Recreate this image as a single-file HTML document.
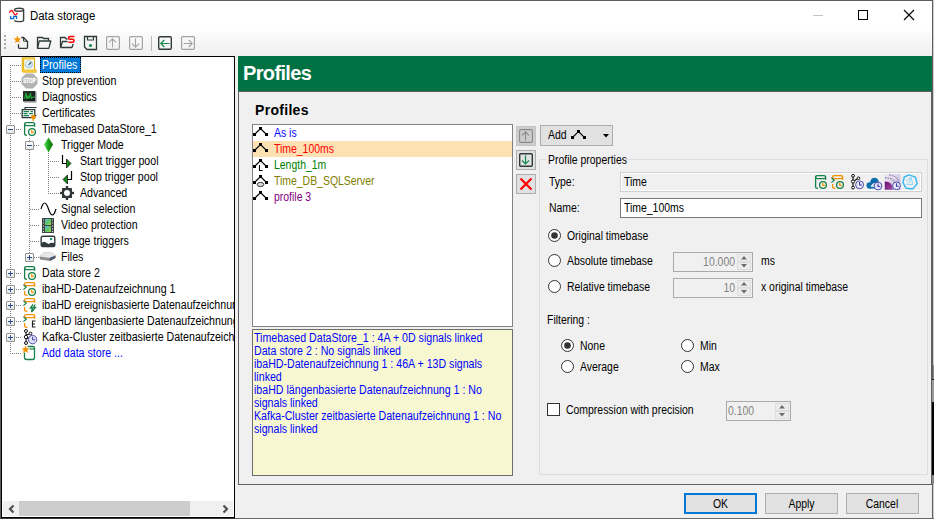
<!DOCTYPE html>
<html><head><meta charset="utf-8"><style>
*{box-sizing:border-box}
html,body{margin:0;padding:0}
body{width:934px;height:519px;overflow:hidden;position:relative;background:#f0f0f0;font-family:"Liberation Sans",sans-serif;font-size:12px;color:#000}
.a{position:absolute}
.t{position:absolute;white-space:nowrap;line-height:14px;font-size:12px;transform-origin:0 0;transform:scaleX(0.87)}
svg{position:absolute;overflow:visible}
</style></head><body>
<div class="a" style="left:0px;top:0px;width:934px;height:1px;background:#5e5e5e"></div>
<div class="a" style="left:0px;top:0px;width:1px;height:519px;background:#5e5e5e"></div>
<div class="a" style="left:932px;top:0px;width:1px;height:519px;background:#5e5e5e"></div>
<div class="a" style="left:933px;top:0px;width:1px;height:519px;background:#cfcfcf"></div>
<div class="a" style="left:933px;top:365px;width:1px;height:14px;background:#8a8a8a"></div>
<div class="a" style="left:932px;top:379px;width:2px;height:1px;background:#202020"></div>
<div class="a" style="left:932px;top:380px;width:2px;height:22px;background:#9a9a9a"></div>
<div class="a" style="left:932px;top:402px;width:2px;height:73px;background:#000"></div>
<div class="a" style="left:932px;top:475px;width:2px;height:9px;background:#888"></div>
<div class="a" style="left:0px;top:518px;width:235px;height:1px;background:#3a3a3a"></div>
<div class="a" style="left:235px;top:518px;width:699px;height:1px;background:#6a6a6a"></div>
<div class="a" style="left:1px;top:1px;width:931px;height:30px;background:#fff"></div>
<svg style="left:8px;top:7px;" width="18" height="17" viewBox="0 0 18 17">
<ellipse cx="11" cy="2.7" rx="4.6" ry="1.5" fill="none" stroke="#3a3f3f" stroke-width="1.4"/>
<path d="M15.6 2.7 L15.6 13.3 Q15.6 14.6 11 14.6 Q7.5 14.6 6.3 13.4" fill="none" stroke="#3a3f3f" stroke-width="1.4"/>
<path d="M1.3 5.6 Q2.5 3.2 3.6 3.5 Q4.8 3.9 5.8 6.2 Q6.8 8.2 7.9 7.6 Q8.8 7.1 9.5 6" fill="none" stroke="#ff1a1a" stroke-width="1.4"/>
<path d="M2.6 9 L2.6 11.6 L5.6 11.6 L5.6 9.4 L8.5 9.4 L8.5 11.9" fill="none" stroke="#0a6ed1" stroke-width="1.4"/>
</svg>
<div class="t" style="left:30px;top:9px;transform:scaleX(0.95)">Data storage</div>
<div class="a" style="left:813px;top:15px;width:10px;height:1px;background:#c4c4c4"></div>
<div class="a" style="left:858px;top:10px;width:10px;height:10px;border:1px solid #000"></div>
<svg style="left:903px;top:9px;" width="12" height="12" viewBox="0 0 12 12"><path d="M1 1L11 11M11 1L1 11" stroke="#000" stroke-width="1.1"/></svg>
<div class="a" style="left:1px;top:31px;width:931px;height:25px;background:linear-gradient(#fcfcfc,#f0f0f0)"></div>
<div class="a" style="left:4px;top:35px;width:2px;height:2px;background:#a9a9a9"></div>
<div class="a" style="left:4px;top:39px;width:2px;height:2px;background:#a9a9a9"></div>
<div class="a" style="left:4px;top:43px;width:2px;height:2px;background:#a9a9a9"></div>
<div class="a" style="left:4px;top:47px;width:2px;height:2px;background:#a9a9a9"></div>
<svg style="left:13px;top:35px;" width="17" height="15" viewBox="0 0 17 15">
<path d="M8.3 2.5 L10.5 2.5 L14.5 6.5 L14.5 12.5 Q14.5 13.3 13.7 13.3 L6.3 13.3 Q5.5 13.3 5.5 12.5 L5.5 9.3" fill="none" stroke="#2f3a3a" stroke-width="1.3"/>
<path d="M10.5 2.8 L10.5 5.2 Q10.5 6.3 11.6 6.3 L14.2 6.3" fill="none" stroke="#2f3a3a" stroke-width="1.1"/>
<path d="M4.4 0.8 L5.5 3.3 L8.2 3.5 L6.1 5.3 L6.8 8 L4.4 6.6 L2 8 L2.7 5.3 L0.6 3.5 L3.3 3.3 Z" fill="#f39200"/>
</svg>
<svg style="left:36px;top:36px;" width="16" height="13" viewBox="0 0 16 13">
<path d="M1.5 12.3 L1.5 1.5 L6.5 1.5 L7.5 2.5 L12.5 2.5 L12.5 4.5" fill="none" stroke="#2f3a3a" stroke-width="1.3"/>
<path d="M1.5 12.3 L3.2 5 L14.8 5 L12.8 12.3 Z" fill="none" stroke="#2f3a3a" stroke-width="1.3" stroke-linejoin="round"/>
</svg>
<svg style="left:59px;top:35px;" width="17" height="14" viewBox="0 0 17 14">
<path d="M1.5 12.5 L1.5 2.5 L6 2.5 L7.5 4 L8.5 4" fill="none" stroke="#2f3a3a" stroke-width="1.3"/>
<path d="M1.5 12.5 L3.5 6.5 L8.5 6.5 M13 12.5 L1.5 12.5 M14.2 9 L13 12.5" fill="none" stroke="#2f3a3a" stroke-width="1.3"/>
<path d="M15.5 1.5 L11 1.5 Q9.6 1.5 9.6 3 Q9.6 4.3 11 4.3 L13.6 4.3 Q15 4.3 15 5.8 Q15 7.2 13.6 7.2 L9.3 7.2" fill="none" stroke="#f00" stroke-width="1.6"/>
</svg>
<svg style="left:83px;top:35px;" width="15" height="16" viewBox="0 0 15 16">
<path d="M1.5 1.5 L13.5 1.5 L13.5 14.5 L4 14.5 L1.5 12 Z" fill="none" stroke="#2f3a3a" stroke-width="1.3"/>
<path d="M4.5 1.5 L4.5 5 L10.5 5 L10.5 1.5" fill="none" stroke="#2f3a3a" stroke-width="1.2"/>
<circle cx="7.5" cy="10.5" r="1.6" fill="#128a4e"/>
</svg>
<svg style="left:106px;top:36px;" width="14" height="14" viewBox="0 0 14 14"><rect x="0.6" y="0.6" width="12.8" height="12.8" rx="1.2" fill="none" stroke="#a3a3a3" stroke-width="1.2"/><path d="M6.5 2.8 L6.5 11.5 M3 6.3 L6.5 2.8 L10 6.3" fill="none" stroke="#a3a3a3" stroke-width="1.1"/></svg>
<svg style="left:129px;top:36px;" width="14" height="14" viewBox="0 0 14 14"><rect x="0.6" y="0.6" width="12.8" height="12.8" rx="1.2" fill="none" stroke="#a3a3a3" stroke-width="1.2"/><path d="M6.5 2.5 L6.5 11.2 M3 7.7 L6.5 11.2 L10 7.7" fill="none" stroke="#a3a3a3" stroke-width="1.1"/></svg>
<div class="a" style="left:151px;top:36px;width:1px;height:15px;background:#b8b8b8"></div>
<svg style="left:158px;top:36px;" width="14" height="14" viewBox="0 0 14 14"><rect x="0.7" y="0.7" width="12.6" height="12.6" rx="1.2" fill="none" stroke="#2f3a3a" stroke-width="1.4"/><path d="M2.8 7.5 L11.5 7.5 M6.3 4 L2.8 7.5 L6.3 11" fill="none" stroke="#128a4e" stroke-width="1.2"/></svg>
<svg style="left:181px;top:36px;" width="14" height="14" viewBox="0 0 14 14"><rect x="0.6" y="0.6" width="12.8" height="12.8" rx="1.2" fill="none" stroke="#a3a3a3" stroke-width="1.2"/><path d="M2.5 7.5 L11.2 7.5 M7.7 4 L11.2 7.5 L7.7 11" fill="none" stroke="#a3a3a3" stroke-width="1.1"/></svg>
<div class="a" style="left:1px;top:56px;width:234px;height:462px;border:1px solid #000;background:#fff"></div>
<div class="a" style="left:0;top:0;width:234px;height:501px;overflow:hidden">
<div class="a" style="left:10px;top:65px;width:1px;height:289px;background:repeating-linear-gradient(180deg,#808080 0 1px,transparent 1px 2px)"></div>
<div class="a" style="left:29px;top:138px;width:1px;height:120px;background:repeating-linear-gradient(180deg,#808080 0 1px,transparent 1px 2px)"></div>
<div class="a" style="left:48px;top:153px;width:1px;height:41px;background:repeating-linear-gradient(180deg,#808080 0 1px,transparent 1px 2px)"></div>
<div class="a" style="left:12px;top:65px;width:9px;height:1px;background:repeating-linear-gradient(90deg,#808080 0 1px,transparent 1px 2px)"></div>
<div class="a" style="left:12px;top:81px;width:9px;height:1px;background:repeating-linear-gradient(90deg,#808080 0 1px,transparent 1px 2px)"></div>
<div class="a" style="left:12px;top:97px;width:9px;height:1px;background:repeating-linear-gradient(90deg,#808080 0 1px,transparent 1px 2px)"></div>
<div class="a" style="left:12px;top:113px;width:9px;height:1px;background:repeating-linear-gradient(90deg,#808080 0 1px,transparent 1px 2px)"></div>
<div class="a" style="left:16px;top:129px;width:5px;height:1px;background:repeating-linear-gradient(90deg,#808080 0 1px,transparent 1px 2px)"></div>
<div class="a" style="left:34px;top:145px;width:6px;height:1px;background:repeating-linear-gradient(90deg,#808080 0 1px,transparent 1px 2px)"></div>
<div class="a" style="left:50px;top:161px;width:9px;height:1px;background:repeating-linear-gradient(90deg,#808080 0 1px,transparent 1px 2px)"></div>
<div class="a" style="left:50px;top:177px;width:9px;height:1px;background:repeating-linear-gradient(90deg,#808080 0 1px,transparent 1px 2px)"></div>
<div class="a" style="left:50px;top:193px;width:9px;height:1px;background:repeating-linear-gradient(90deg,#808080 0 1px,transparent 1px 2px)"></div>
<div class="a" style="left:30px;top:209px;width:10px;height:1px;background:repeating-linear-gradient(90deg,#808080 0 1px,transparent 1px 2px)"></div>
<div class="a" style="left:30px;top:225px;width:10px;height:1px;background:repeating-linear-gradient(90deg,#808080 0 1px,transparent 1px 2px)"></div>
<div class="a" style="left:30px;top:241px;width:10px;height:1px;background:repeating-linear-gradient(90deg,#808080 0 1px,transparent 1px 2px)"></div>
<div class="a" style="left:34px;top:257px;width:6px;height:1px;background:repeating-linear-gradient(90deg,#808080 0 1px,transparent 1px 2px)"></div>
<div class="a" style="left:16px;top:273px;width:5px;height:1px;background:repeating-linear-gradient(90deg,#808080 0 1px,transparent 1px 2px)"></div>
<div class="a" style="left:16px;top:289px;width:5px;height:1px;background:repeating-linear-gradient(90deg,#808080 0 1px,transparent 1px 2px)"></div>
<div class="a" style="left:16px;top:305px;width:5px;height:1px;background:repeating-linear-gradient(90deg,#808080 0 1px,transparent 1px 2px)"></div>
<div class="a" style="left:16px;top:321px;width:5px;height:1px;background:repeating-linear-gradient(90deg,#808080 0 1px,transparent 1px 2px)"></div>
<div class="a" style="left:16px;top:337px;width:5px;height:1px;background:repeating-linear-gradient(90deg,#808080 0 1px,transparent 1px 2px)"></div>
<div class="a" style="left:12px;top:353px;width:9px;height:1px;background:repeating-linear-gradient(90deg,#808080 0 1px,transparent 1px 2px)"></div>
<div class="a" style="left:6px;top:125px;width:9px;height:9px;border:1px solid #919191;border-radius:1px;background:linear-gradient(#fff,#e6e6e6)"></div>
<div class="a" style="left:8px;top:129px;width:5px;height:1px;background:#2b4c8c"></div>
<div class="a" style="left:25px;top:141px;width:9px;height:9px;border:1px solid #919191;border-radius:1px;background:linear-gradient(#fff,#e6e6e6)"></div>
<div class="a" style="left:27px;top:145px;width:5px;height:1px;background:#2b4c8c"></div>
<div class="a" style="left:25px;top:253px;width:9px;height:9px;border:1px solid #919191;border-radius:1px;background:linear-gradient(#fff,#e6e6e6)"></div>
<div class="a" style="left:27px;top:257px;width:5px;height:1px;background:#2b4c8c"></div>
<div class="a" style="left:29px;top:255px;width:1px;height:5px;background:#2b4c8c"></div>
<div class="a" style="left:6px;top:269px;width:9px;height:9px;border:1px solid #919191;border-radius:1px;background:linear-gradient(#fff,#e6e6e6)"></div>
<div class="a" style="left:8px;top:273px;width:5px;height:1px;background:#2b4c8c"></div>
<div class="a" style="left:10px;top:271px;width:1px;height:5px;background:#2b4c8c"></div>
<div class="a" style="left:6px;top:285px;width:9px;height:9px;border:1px solid #919191;border-radius:1px;background:linear-gradient(#fff,#e6e6e6)"></div>
<div class="a" style="left:8px;top:289px;width:5px;height:1px;background:#2b4c8c"></div>
<div class="a" style="left:10px;top:287px;width:1px;height:5px;background:#2b4c8c"></div>
<div class="a" style="left:6px;top:301px;width:9px;height:9px;border:1px solid #919191;border-radius:1px;background:linear-gradient(#fff,#e6e6e6)"></div>
<div class="a" style="left:8px;top:305px;width:5px;height:1px;background:#2b4c8c"></div>
<div class="a" style="left:10px;top:303px;width:1px;height:5px;background:#2b4c8c"></div>
<div class="a" style="left:6px;top:317px;width:9px;height:9px;border:1px solid #919191;border-radius:1px;background:linear-gradient(#fff,#e6e6e6)"></div>
<div class="a" style="left:8px;top:321px;width:5px;height:1px;background:#2b4c8c"></div>
<div class="a" style="left:10px;top:319px;width:1px;height:5px;background:#2b4c8c"></div>
<div class="a" style="left:6px;top:333px;width:9px;height:9px;border:1px solid #919191;border-radius:1px;background:linear-gradient(#fff,#e6e6e6)"></div>
<div class="a" style="left:8px;top:337px;width:5px;height:1px;background:#2b4c8c"></div>
<div class="a" style="left:10px;top:335px;width:1px;height:5px;background:#2b4c8c"></div>
<div class="a" style="left:40px;top:57px;width:41px;height:16px;background:#0078d7;outline:1px dotted #000;outline-offset:-1px"></div>
<div class="t" style="left:42px;top:58px;color:#fff;transform:scaleX(0.885)">Profiles</div>
<div class="t" style="left:42px;top:74px;color:#000;transform:scaleX(0.885)">Stop prevention</div>
<div class="t" style="left:42px;top:90px;color:#000;transform:scaleX(0.885)">Diagnostics</div>
<div class="t" style="left:42px;top:106px;color:#000;transform:scaleX(0.885)">Certificates</div>
<div class="t" style="left:42px;top:122px;color:#000;transform:scaleX(0.885)">Timebased DataStore_1</div>
<div class="t" style="left:61px;top:138px;color:#000;transform:scaleX(0.885)">Trigger Mode</div>
<div class="t" style="left:80px;top:154px;color:#000;transform:scaleX(0.885)">Start trigger pool</div>
<div class="t" style="left:80px;top:170px;color:#000;transform:scaleX(0.885)">Stop trigger pool</div>
<div class="t" style="left:80px;top:186px;color:#000;transform:scaleX(0.885)">Advanced</div>
<div class="t" style="left:61px;top:202px;color:#000;transform:scaleX(0.885)">Signal selection</div>
<div class="t" style="left:61px;top:218px;color:#000;transform:scaleX(0.885)">Video protection</div>
<div class="t" style="left:61px;top:234px;color:#000;transform:scaleX(0.885)">Image triggers</div>
<div class="t" style="left:61px;top:250px;color:#000;transform:scaleX(0.885)">Files</div>
<div class="t" style="left:42px;top:266px;color:#000;transform:scaleX(0.885)">Data store 2</div>
<div class="t" style="left:42px;top:282px;color:#000;transform:scaleX(0.885)">ibaHD-Datenaufzeichnung 1</div>
<div class="t" style="left:42px;top:298px;color:#000;transform:scaleX(0.885)">ibaHD ereignisbasierte Datenaufzeichnung 1</div>
<div class="t" style="left:42px;top:314px;color:#000;transform:scaleX(0.885)">ibaHD l&auml;ngenbasierte Datenaufzeichnung 1</div>
<div class="t" style="left:42px;top:330px;color:#000;transform:scaleX(0.885)">Kafka-Cluster zeitbasierte Datenaufzeichnung 1</div>
<div class="t" style="left:42px;top:346px;color:#0000ff;transform:scaleX(0.885)">Add data store ...</div>
<svg style="left:21px;top:57px;" width="16" height="16" viewBox="0 0 16 16"><defs><radialGradient id="dial" cx="0.4" cy="0.35" r="0.7"><stop offset="0" stop-color="#ffffff"/><stop offset="1" stop-color="#9fd3ee"/></radialGradient></defs>
<path d="M1.5 1 L13.5 1 L13.5 12 L15 13.5 L15 15 L2 15 L1.5 14 Z" fill="#fffbe6" stroke="#d9a81a" stroke-width="1.1"/>
<rect x="0.8" y="0.5" width="2.4" height="14.5" fill="#e8b825"/>
<rect x="0.8" y="0.5" width="13" height="2" fill="#f0c63a"/>
<path d="M2 12.5 L13.5 12.5 L15.5 14.5 L15.5 15.5 L2 15.5 Z" fill="#f0c63a"/>
<circle cx="8" cy="7.3" r="3.9" fill="url(#dial)" stroke="#b7cbd6" stroke-width="0.7"/>
<path d="M7.6 7.8 L10.2 5.2" stroke="#3a4650" stroke-width="1.2"/></svg>
<svg style="left:21px;top:73px;" width="17" height="16" viewBox="0 0 17 16"><path d="M5 0.5 L12 0.5 L16.5 5 L16.5 11 L12 15.5 L5 15.5 L0.5 11 L0.5 5 Z" fill="#b3b3b3"/>
<text x="2.2" y="10.2" font-family="Liberation Sans" font-weight="bold" font-size="6.4" fill="#fff" stroke="#fff" stroke-width="0.3" textLength="12.6" lengthAdjust="spacingAndGlyphs">STOP</text></svg>
<svg style="left:22px;top:90px;" width="15" height="14" viewBox="0 0 15 14"><defs><linearGradient id="dgx" x1="0" y1="0" x2="1" y2="1"><stop offset="0" stop-color="#2a3a2c"/><stop offset="1" stop-color="#0e1610"/></linearGradient></defs>
<rect x="1" y="1" width="12.5" height="10.5" fill="url(#dgx)"/>
<path d="M13.5 2 L14.2 2 L14.2 12.2 L2 12.2 L2 11.5" fill="none" stroke="#9a9a9a" stroke-width="0.9"/>
<path d="M1.8 8 L3 8 L4 3.5 L5 9 L6.2 5.5 L7.2 8.5 L8.5 3 L9.5 9 L10.5 7 L12.8 7" fill="none" stroke="#22b83a" stroke-width="1"/></svg>
<svg style="left:21px;top:106px;" width="17" height="16" viewBox="0 0 17 16"><path d="M4 4 L4 1.5 L15.5 1.5" fill="none" stroke="#2f3a3a" stroke-width="1.2"/>
<rect x="1.2" y="3.6" width="12.6" height="8" fill="#fff" stroke="#2f3a3a" stroke-width="1.3"/>
<path d="M13.8 9.5 L15.5 9.5" stroke="#2f3a3a" stroke-width="1.1"/>
<path d="M2.5 5.6 L8 5.6 M9.5 5.6 L12 5.6 M2.5 7.6 L6.5 7.6 M8 7.6 L12 7.6 M2.5 9.6 L8 9.6" stroke="#16814a" stroke-width="1.1"/>
<circle cx="12.3" cy="11" r="2.3" fill="#f39200"/><path d="M12.3 12 L12.3 14.8" stroke="#f39200" stroke-width="1.6"/></svg>
<svg style="left:23px;top:121px;" width="14" height="16" viewBox="0 0 14 16"><rect x="1.6" y="1.6" width="10" height="3" rx="1.5" fill="#fff" stroke="#16814a" stroke-width="1.3"/>
<path d="M1.6 2.6 L1.6 13 Q1.6 14.3 4 14.3 M11.6 2.6 L11.6 5.8" fill="none" stroke="#16814a" stroke-width="1.3"/><circle cx="9" cy="11" r="3.4" fill="#fff" stroke="#16814a" stroke-width="1.3"/><path d="M8.7 8.8 L8.7 11.3 L11 11.3" fill="none" stroke="#f39200" stroke-width="1.2"/></svg>
<svg style="left:43px;top:137px;" width="11" height="16" viewBox="0 0 11 16"><defs><linearGradient id="dg" x1="0" x2="1"><stop offset="0" stop-color="#5ee05e"/><stop offset="0.5" stop-color="#1aa21a"/><stop offset="1" stop-color="#0a6a0a"/></linearGradient></defs>
<path d="M5.5 0.5 L10 7.5 L5.5 15.5 L1 7.5 Z" fill="url(#dg)"/></svg>
<svg style="left:60px;top:154px;" width="14" height="15" viewBox="0 0 14 15"><path d="M2.5 1 L2.5 9.5 L7 9.5" fill="none" stroke="#000" stroke-width="1.2"/><path d="M6.5 5 L11 9.5 L6.5 14 Z" fill="#138a13" stroke="#000" stroke-width="0.7"/></svg>
<svg style="left:61px;top:170px;" width="14" height="15" viewBox="0 0 14 15"><path d="M10.5 1 L10.5 9.5 L6 9.5" fill="none" stroke="#000" stroke-width="1.2"/><path d="M6.5 5 L2 9.5 L6.5 14 Z" fill="#138a13" stroke="#000" stroke-width="0.7"/></svg>
<svg style="left:60px;top:186px;" width="15" height="15" viewBox="0 0 15 15"><g fill="#2f3838"><rect x="2" y="2" width="10" height="10" rx="0.6"/><rect x="5.8" y="0" width="2.4" height="2.5"/><rect x="5.8" y="11.5" width="2.4" height="2.5"/><rect x="0" y="5.8" width="2.5" height="2.4"/><rect x="11.5" y="5.8" width="2.5" height="2.4"/></g><circle cx="7" cy="7" r="3" fill="#fff"/></svg>
<svg style="left:40px;top:202px;" width="17" height="14" viewBox="0 0 17 14"><path d="M1 7 Q4.5 -5 8.5 7 Q12.5 19 16 7" fill="none" stroke="#000" stroke-width="1.2"/></svg>
<svg style="left:42px;top:218px;" width="12" height="15" viewBox="0 0 12 15"><defs><linearGradient id="fg" x1="0" y1="0" x2="1" y2="1"><stop offset="0" stop-color="#6ab8e8"/><stop offset="0.5" stop-color="#5cc46a"/><stop offset="1" stop-color="#9ad24e"/></linearGradient></defs>
<rect x="0" y="0" width="12" height="15" fill="#3c4640"/>
<rect x="3" y="1" width="6" height="6" fill="url(#fg)"/><rect x="3" y="8" width="6" height="6" fill="url(#fg)"/>
<g fill="#e8e8e8"><rect x="1" y="1.5" width="1" height="1"/><rect x="1" y="4.5" width="1" height="1"/><rect x="1" y="7.5" width="1" height="1"/><rect x="1" y="10.5" width="1" height="1"/><rect x="1" y="13" width="1" height="1"/>
<rect x="10" y="1.5" width="1" height="1"/><rect x="10" y="4.5" width="1" height="1"/><rect x="10" y="7.5" width="1" height="1"/><rect x="10" y="10.5" width="1" height="1"/><rect x="10" y="13" width="1" height="1"/></g></svg>
<svg style="left:40px;top:235px;" width="16" height="13" viewBox="0 0 16 13"><rect x="1.2" y="1.2" width="13.6" height="10.3" rx="1.5" fill="#fff" stroke="#2f3a3a" stroke-width="1.4"/>
<path d="M1.2 11.5 L1.2 9 Q3 6 5 7 Q7 8 8.5 9 Q11 7 14.8 8 L14.8 11.5 Z" fill="#2f3a3a"/><rect x="10" y="3" width="2.2" height="2.2" fill="#2a9a6a"/></svg>
<svg style="left:38px;top:251px;" width="19" height="11" viewBox="0 0 19 11"><path d="M1.5 5.5 L6 1.5 L13.5 1 L17.5 4.5 L17.5 7 L12 10 L2 8.5 Z" fill="#8c8c8c"/>
<path d="M1.5 5.5 L6 1.5 L13.5 1 L17.5 4.5 L11.5 7 Z" fill="#e6e6e6"/>
<path d="M11.5 7 L17.5 4.5 L17.5 7 L12 10 Z" fill="#5a5a66"/>
<rect x="13" y="6" width="2" height="1.5" fill="#3a5a9a"/></svg>
<svg style="left:23px;top:265px;" width="14" height="16" viewBox="0 0 14 16"><rect x="1.6" y="1.6" width="10" height="3" rx="1.5" fill="#fff" stroke="#16814a" stroke-width="1.3"/>
<path d="M1.6 2.6 L1.6 13 Q1.6 14.3 4 14.3 M11.6 2.6 L11.6 5.8" fill="none" stroke="#16814a" stroke-width="1.3"/><circle cx="9" cy="11" r="3.4" fill="#fff" stroke="#16814a" stroke-width="1.3"/><path d="M8.7 8.8 L8.7 11.3 L11 11.3" fill="none" stroke="#f39200" stroke-width="1.2"/></svg>
<svg style="left:23px;top:281px;" width="14" height="16" viewBox="0 0 14 16"><rect x="1.6" y="1.6" width="10" height="3" rx="1.5" fill="#fff" stroke="#f39200" stroke-width="1.3"/>
<path d="M11.6 2.6 L11.6 5.8 M1.6 10 L1.6 13 Q1.6 14.3 4.5 14.3" fill="none" stroke="#f39200" stroke-width="1.3"/>
<path d="M0.4 3.8 L3.2 6.2 L0.4 8.6" fill="none" stroke="#16814a" stroke-width="1.2"/><circle cx="9" cy="11" r="3.4" fill="#fff" stroke="#16814a" stroke-width="1.3"/><path d="M8.7 8.8 L8.7 11.3 L11 11.3" fill="none" stroke="#f39200" stroke-width="1.2"/></svg>
<svg style="left:23px;top:297px;" width="14" height="16" viewBox="0 0 14 16"><rect x="1.6" y="1.6" width="10" height="3" rx="1.5" fill="#fff" stroke="#f39200" stroke-width="1.3"/>
<path d="M11.6 2.6 L11.6 5.8 M1.6 10 L1.6 13 Q1.6 14.3 4.5 14.3" fill="none" stroke="#f39200" stroke-width="1.3"/>
<path d="M0.4 3.8 L3.2 6.2 L0.4 8.6" fill="none" stroke="#16814a" stroke-width="1.2"/><path d="M10 7.5 L7.5 11 L9.5 11 L8.5 15 L12.5 10.5 L10.5 10.5 L12 7.5" fill="none" stroke="#16814a" stroke-width="1.3"/></svg>
<svg style="left:23px;top:313px;" width="14" height="16" viewBox="0 0 14 16"><rect x="1.6" y="1.6" width="10" height="3" rx="1.5" fill="#fff" stroke="#f39200" stroke-width="1.3"/>
<path d="M11.6 2.6 L11.6 5.8 M1.6 10 L1.6 13 Q1.6 14.3 4.5 14.3" fill="none" stroke="#f39200" stroke-width="1.3"/>
<path d="M0.4 3.8 L3.2 6.2 L0.4 8.6" fill="none" stroke="#16814a" stroke-width="1.2"/><path d="M9.5 7.5 L9.5 14.5 M9.5 8 L12.5 8 M9.5 11 L12 11 M9.5 14 L12.5 14" fill="none" stroke="#222" stroke-width="1.2"/></svg>
<svg style="left:23px;top:329px;" width="15" height="16" viewBox="0 0 15 16"><path d="M3 2 L3 14 M3 6 L7 5 M3 10 L7 8" stroke="#111" stroke-width="1"/>
<circle cx="3" cy="2" r="1.5" fill="#fff" stroke="#111"/><circle cx="3" cy="8" r="1.7" fill="#fff" stroke="#111"/><circle cx="3" cy="14" r="1.5" fill="#fff" stroke="#111"/>
<circle cx="7.5" cy="4.5" r="1.4" fill="#fff" stroke="#111"/>
<circle cx="9.6" cy="10.6" r="4.2" fill="#e0e0f6" stroke="#4848a8" stroke-width="0.95"/><path d="M9.6 7.8 L9.6 10.8 L12 10.8" fill="none" stroke="#3c3ca8" stroke-width="1"/></svg>
<svg style="left:21px;top:345px;" width="17" height="16" viewBox="0 0 17 16"><path d="M6.5 1.5 L12 1.5 Q13.5 1.5 13.5 3 L13.5 12.5 Q13.5 14.5 11.5 14.5 L5.5 14.5 Q3.5 14.5 3.5 12.5 L3.5 7.5" fill="none" stroke="#16814a" stroke-width="1.3"/>
<path d="M8.5 4 L13.5 4" stroke="#16814a" stroke-width="1.2"/>
<path d="M4.5 0.6 L5.6 3.2 L8.4 3.4 L6.3 5.2 L7 8 L4.5 6.5 L2 8 L2.7 5.2 L0.6 3.4 L3.4 3.2 Z" fill="#f39200"/></svg>
</div>
<div class="a" style="left:3px;top:501px;width:230px;height:15px;background:#f0f0f0"></div>
<div class="a" style="left:19px;top:501px;width:171px;height:15px;background:#cdcdcd"></div>
<svg style="left:3px;top:501px;" width="16" height="16" viewBox="0 0 16 16"><path d="M10.5 4.5 L7 8 L10.5 11.5" fill="none" stroke="#505050" stroke-width="2.2"/></svg>
<svg style="left:217px;top:501px;" width="16" height="16" viewBox="0 0 16 16"><path d="M6.5 4.5 L10 8 L6.5 11.5" fill="none" stroke="#505050" stroke-width="2.2"/></svg>
<div class="a" style="left:238px;top:56px;width:694px;height:35px;background:#007142"></div>
<div class="t" style="left:243px;top:62px;font-size:20px;line-height:22px;font-weight:bold;color:#fff;transform:none;letter-spacing:-0.65px">Profiles</div>
<div class="a" style="left:238px;top:91px;width:694px;height:394px;border:1px solid #5f5f5f"></div>
<div class="t" style="left:255px;top:102px;font-size:14px;line-height:16px;font-weight:bold;transform:none;letter-spacing:0.3px">Profiles</div>
<div class="a" style="left:252px;top:124px;width:261px;height:203px;border:1px solid #828282;background:#fff"></div>
<div class="a" style="left:253px;top:141px;width:259px;height:16px;background:#fde1b2"></div>
<svg style="left:252px;top:126px;" width="16" height="14" viewBox="0 0 16 14"><path d="M2.5 8.5 L8.5 2.5 L14.5 8.5" fill="none" stroke="#000" stroke-width="1.2"/><rect x="1" y="7" width="3" height="3"/><rect x="7" y="1" width="3" height="3"/><rect x="13" y="7" width="3" height="3"/></svg>
<div class="t" style="left:274px;top:126px;color:#0000ff">As is</div>
<svg style="left:252px;top:142px;" width="16" height="14" viewBox="0 0 16 14"><path d="M2.5 8.5 L8.5 2.5 L14.5 8.5" fill="none" stroke="#000" stroke-width="1.2"/><rect x="1" y="7" width="3" height="3"/><rect x="7" y="1" width="3" height="3"/><rect x="13" y="7" width="3" height="3"/></svg>
<div class="t" style="left:274px;top:142px;color:#ff0000">Time_100ms</div>
<svg style="left:252px;top:158px;" width="16" height="14" viewBox="0 0 16 14"><path d="M2.5 8.5 L8.5 2.5 L14.5 8.5" fill="none" stroke="#000" stroke-width="1.2"/><rect x="1" y="7" width="3" height="3"/><rect x="7" y="1" width="3" height="3"/><rect x="13" y="7" width="3" height="3"/><path d="M7.5 7 L7.5 12.5 L10.5 12.5" fill="none" stroke="#000" stroke-width="1.1"/></svg>
<div class="t" style="left:274px;top:158px;color:#008000">Length_1m</div>
<svg style="left:252px;top:174px;" width="16" height="14" viewBox="0 0 16 14"><path d="M2.5 8.5 L8.5 2.5 L14.5 8.5" fill="none" stroke="#000" stroke-width="1.2"/><rect x="1" y="7" width="3" height="3"/><rect x="7" y="1" width="3" height="3"/><rect x="13" y="7" width="3" height="3"/><ellipse cx="8.5" cy="10.5" rx="3.3" ry="2.1" fill="#ddd" stroke="#222" stroke-width="0.9"/></svg>
<div class="t" style="left:274px;top:174px;color:#808000">Time_DB_SQLServer</div>
<svg style="left:252px;top:190px;" width="16" height="14" viewBox="0 0 16 14"><path d="M2.5 8.5 L8.5 2.5 L14.5 8.5" fill="none" stroke="#000" stroke-width="1.2"/><rect x="1" y="7" width="3" height="3"/><rect x="7" y="1" width="3" height="3"/><rect x="13" y="7" width="3" height="3"/></svg>
<div class="t" style="left:274px;top:190px;color:#800080">profile 3</div>
<div class="a" style="left:252px;top:329px;width:261px;height:147px;border:1px solid #6d6d6d;background:#f7f8d2"></div>
<div class="t" style="left:254px;top:331px;color:#0000ff;transform:scaleX(0.885)">Timebased DataStore_1 : 4A + 0D signals linked</div>
<div class="t" style="left:254px;top:344px;color:#0000ff;transform:scaleX(0.885)">Data store 2 : No signals linked</div>
<div class="t" style="left:254px;top:357px;color:#0000ff;transform:scaleX(0.885)">ibaHD-Datenaufzeichnung 1 : 46A + 13D signals</div>
<div class="t" style="left:254px;top:370px;color:#0000ff;transform:scaleX(0.885)">linked</div>
<div class="t" style="left:254px;top:383px;color:#0000ff;transform:scaleX(0.885)">ibaHD l&auml;ngenbasierte Datenaufzeichnung 1 : No</div>
<div class="t" style="left:254px;top:396px;color:#0000ff;transform:scaleX(0.885)">signals linked</div>
<div class="t" style="left:254px;top:409px;color:#0000ff;transform:scaleX(0.885)">Kafka-Cluster zeitbasierte Datenaufzeichnung 1 : No</div>
<div class="t" style="left:254px;top:422px;color:#0000ff;transform:scaleX(0.885)">signals linked</div>
<div class="a" style="left:516px;top:126px;width:20px;height:20px;background:#cccccc;border:1px solid #c4c4c4"></div>
<svg style="left:519px;top:129px;" width="14" height="14" viewBox="0 0 14 14"><rect x="0.6" y="0.6" width="12.8" height="12.8" rx="1.3" fill="none" stroke="#8a8a8a" stroke-width="1.1"/><path d="M6.5 2.8 L6.5 11.5 M3 6.3 L6.5 2.8 L10 6.3" fill="none" stroke="#8a8a8a" stroke-width="1.1"/></svg>
<div class="a" style="left:516px;top:150px;width:20px;height:20px;background:#e1e1e1;border:1px solid #adadad"></div>
<svg style="left:519px;top:153px;" width="14" height="14" viewBox="0 0 14 14"><rect x="0.7" y="0.7" width="12.6" height="12.6" rx="1" fill="none" stroke="#2f3a3a" stroke-width="1.4"/><path d="M6.5 2.5 L6.5 11 M3 7.5 L6.5 11 L10 7.5" fill="none" stroke="#128a4e" stroke-width="1.2"/></svg>
<div class="a" style="left:516px;top:174px;width:20px;height:20px;background:#e1e1e1;border:1px solid #adadad"></div>
<svg style="left:519px;top:177px;" width="14" height="14" viewBox="0 0 14 14"><path d="M1.5 1.5 L12.5 12.5 M12.5 1.5 L1.5 12.5" stroke="#f00" stroke-width="2.2"/></svg>
<div class="a" style="left:540px;top:125px;width:73px;height:21px;background:#e1e1e1;border:1px solid #adadad"></div>
<div class="t" style="left:548px;top:128px;">Add</div>
<svg style="left:571px;top:130px;" width="16" height="10" viewBox="0 0 16 10"><path d="M1.5 7.5 L7.5 1.5 L13.5 7.5" fill="none" stroke="#000" stroke-width="1.1"/><rect x="0" y="6" width="3" height="3"/><rect x="6" y="0" width="3" height="3"/><rect x="12" y="6" width="3" height="3"/></svg>
<svg style="left:603px;top:134px;" width="6" height="4" viewBox="0 0 6 4"><path d="M0 0 L6 0 L3 3.5 Z" fill="#000"/></svg>
<div class="a" style="left:539px;top:159px;width:389px;height:316px;border:1px solid #dcdcdc"></div>
<div class="a" style="left:546px;top:150px;width:80px;height:14px;background:#f0f0f0"></div>
<div class="t" style="left:548px;top:153px;">Profile properties</div>
<div class="t" style="left:549px;top:175px;">Type:</div>
<div class="t" style="left:549px;top:201px;">Name:</div>
<div class="a" style="left:620px;top:172px;width:302px;height:20px;border:1px solid #cfcfcf;background:#f0f0f0;box-shadow:inset 1px 1px 0 #fff,inset -1px -1px 0 #fff"></div>
<div class="t" style="left:624px;top:175px;">Time</div>
<div class="a" style="left:620px;top:198px;width:302px;height:20px;border:1px solid #7a7a7a;background:#fff"></div>
<div class="t" style="left:624px;top:201px;">Time_100ms</div>
<svg style="left:814px;top:174px;" width="14" height="16" viewBox="0 0 14 16"><rect x="1.6" y="1.6" width="10" height="3" rx="1.5" fill="#f0f0f0" stroke="#16814a" stroke-width="1.3"/><path d="M11.6 2.6 L11.6 5.8" fill="none" stroke="#16814a" stroke-width="1.3"/><path d="M1.6 2.6 L1.6 13 Q1.6 14.3 4 14.3" fill="none" stroke="#16814a" stroke-width="1.3"/><circle cx="9" cy="11" r="3.4" fill="#f0f0f0" stroke="#16814a" stroke-width="1.3"/><path d="M8.7 8.8 L8.7 11.3 L11 11.3" fill="none" stroke="#f39200" stroke-width="1.2"/></svg>
<svg style="left:831px;top:174px;" width="14" height="16" viewBox="0 0 14 16"><rect x="1.6" y="1.6" width="10" height="3" rx="1.5" fill="#f0f0f0" stroke="#f39200" stroke-width="1.3"/><path d="M11.6 2.6 L11.6 5.8" fill="none" stroke="#f39200" stroke-width="1.3"/><path d="M1.6 10 L1.6 13 Q1.6 14.3 4.5 14.3" fill="none" stroke="#f39200" stroke-width="1.3"/><path d="M0.4 3.8 L3.2 6.2 L0.4 8.6" fill="none" stroke="#16814a" stroke-width="1.2"/><circle cx="9" cy="11" r="3.4" fill="#f0f0f0" stroke="#16814a" stroke-width="1.3"/><path d="M8.7 8.8 L8.7 11.3 L11 11.3" fill="none" stroke="#f39200" stroke-width="1.2"/></svg>
<svg style="left:850px;top:174px;" width="15" height="16" viewBox="0 0 15 16"><path d="M3 2 L3 14 M3 7.5 L8 4.5" stroke="#111" stroke-width="1.1"/>
<circle cx="3" cy="1.8" r="1.4" fill="#fff" stroke="#111"/><circle cx="3" cy="7.5" r="1.6" fill="#fff" stroke="#111"/><circle cx="3" cy="13.6" r="1.4" fill="#fff" stroke="#111"/><circle cx="8.5" cy="4.2" r="1.3" fill="#fff" stroke="#111"/>
<circle cx="9.6" cy="10.8" r="4" fill="#e6e6f8" stroke="#4848a8" stroke-width="0.95"/><path d="M9.6 8 L9.6 11 L12 11" fill="none" stroke="#3c3ca8" stroke-width="1.1"/></svg>
<svg style="left:866px;top:177px;" width="17" height="14" viewBox="0 0 17 14"><g fill="#0b6eae"><circle cx="8.5" cy="5" r="4.2"/><circle cx="3.6" cy="8.4" r="3.1"/><rect x="3.6" y="6" width="10" height="5.5"/></g>
<path d="M5 9.5 L8 6.5 L10.5 6.5 L9.5 8 L6.5 9.5 L10 9.5" fill="none" stroke="#fff" stroke-width="1.1"/>
<circle cx="12" cy="9" r="3.9" fill="#e6e6f8" stroke="#4848a8" stroke-width="0.95"/><path d="M12 6.5 L12 9.5 L14.2 9.5" fill="none" stroke="#3c3ca8" stroke-width="1.1"/></svg>
<svg style="left:884px;top:174px;" width="17" height="16" viewBox="0 0 17 16"><defs><linearGradient id="pg" x1="0" y1="0" x2="1" y2="1"><stop offset="0" stop-color="#eee8f4"/><stop offset="1" stop-color="#c4b6d8"/></linearGradient><linearGradient id="pq" x1="0" y1="0" x2="1" y2="1"><stop offset="0" stop-color="#6a0f6e"/><stop offset="1" stop-color="#a24aa8"/></linearGradient></defs>
<rect x="0.5" y="0" width="16" height="16" fill="url(#pg)"/>
<path d="M0.8 7.5 Q8.8 7.5 8.8 15.8 L0.8 15.8 Z" fill="url(#pq)"/>
<path d="M1 3.8 Q12.5 3.8 12.5 15 M5 0.8 Q15.5 2 15.5 12" fill="none" stroke="#7a6aa0" stroke-width="1" stroke-dasharray="1.6 1"/>
<circle cx="12.5" cy="11.8" r="3.9" fill="#e6e6f8" stroke="#4848a8" stroke-width="0.95"/><path d="M12.5 9.2 L12.5 12.2 L14.7 12.2" fill="none" stroke="#3c3ca8" stroke-width="1.1"/></svg>
<svg style="left:902px;top:174px;" width="16" height="16" viewBox="0 0 16 16"><path d="M6.8 0.9 L13.4 3.1 L15.1 9.6 L10.6 15.1 L4.2 14.3 L0.9 8.6 L2.3 3 Z" fill="none" stroke="#3ab8f2" stroke-width="1.5" stroke-linejoin="round"/>
<path d="M4 7.6 L9 3.2 L10.8 10.6 L4 10.2 M9 3.2 L7 9" fill="none" stroke="#8fd6f7" stroke-width="1"/></svg>
<svg style="left:548px;top:229px;" width="13" height="13" viewBox="0 0 13 13"><circle cx="6.5" cy="6.5" r="6" fill="#fff" stroke="#333" stroke-width="1"/><circle cx="6.5" cy="6.5" r="3.3" fill="#333"/></svg>
<div class="t" style="left:567px;top:229px;">Original timebase</div>
<svg style="left:548px;top:254px;" width="13" height="13" viewBox="0 0 13 13"><circle cx="6.5" cy="6.5" r="6" fill="#fff" stroke="#333" stroke-width="1"/></svg>
<div class="t" style="left:567px;top:254px;">Absolute timebase</div>
<svg style="left:548px;top:280px;" width="13" height="13" viewBox="0 0 13 13"><circle cx="6.5" cy="6.5" r="6" fill="#fff" stroke="#333" stroke-width="1"/></svg>
<div class="t" style="left:567px;top:280px;">Relative timebase</div>
<div class="a" style="left:673px;top:252px;width:80px;height:20px;border:1px solid #a9a9a9;background:#f0f0f0"></div>
<div class="a" style="left:737px;top:254px;width:14px;height:8px;background:#ececec;border:1px solid #dedede"></div>
<div class="a" style="left:737px;top:262px;width:14px;height:8px;background:#ececec;border:1px solid #dedede"></div>
<svg style="left:741px;top:256px;" width="6" height="4" viewBox="0 0 6 4"><path d="M0 3.5 L3 0 L6 3.5 Z" fill="#6d6d6d"/></svg>
<svg style="left:741px;top:264px;" width="6" height="4" viewBox="0 0 6 4"><path d="M0 0 L6 0 L3 3.5 Z" fill="#6d6d6d"/></svg>
<div class="t" style="left:673px;top:255px;width:71.3px;text-align:right;color:#828282">10.000</div>
<div class="t" style="left:761px;top:254px;">ms</div>
<div class="a" style="left:673px;top:278px;width:80px;height:20px;border:1px solid #a9a9a9;background:#f0f0f0"></div>
<div class="a" style="left:737px;top:280px;width:14px;height:8px;background:#ececec;border:1px solid #dedede"></div>
<div class="a" style="left:737px;top:288px;width:14px;height:8px;background:#ececec;border:1px solid #dedede"></div>
<svg style="left:741px;top:282px;" width="6" height="4" viewBox="0 0 6 4"><path d="M0 3.5 L3 0 L6 3.5 Z" fill="#6d6d6d"/></svg>
<svg style="left:741px;top:290px;" width="6" height="4" viewBox="0 0 6 4"><path d="M0 0 L6 0 L3 3.5 Z" fill="#6d6d6d"/></svg>
<div class="t" style="left:673px;top:281px;width:71.3px;text-align:right;color:#828282">10</div>
<div class="t" style="left:761px;top:280px;">x original timebase</div>
<div class="t" style="left:547px;top:313px;">Filtering :</div>
<svg style="left:561px;top:339px;" width="13" height="13" viewBox="0 0 13 13"><circle cx="6.5" cy="6.5" r="6" fill="#fff" stroke="#333" stroke-width="1"/><circle cx="6.5" cy="6.5" r="3.3" fill="#333"/></svg>
<div class="t" style="left:580px;top:339px;">None</div>
<svg style="left:561px;top:360px;" width="13" height="13" viewBox="0 0 13 13"><circle cx="6.5" cy="6.5" r="6" fill="#fff" stroke="#333" stroke-width="1"/></svg>
<div class="t" style="left:580px;top:360px;">Average</div>
<svg style="left:681px;top:339px;" width="13" height="13" viewBox="0 0 13 13"><circle cx="6.5" cy="6.5" r="6" fill="#fff" stroke="#333" stroke-width="1"/></svg>
<div class="t" style="left:700px;top:339px;">Min</div>
<svg style="left:681px;top:360px;" width="13" height="13" viewBox="0 0 13 13"><circle cx="6.5" cy="6.5" r="6" fill="#fff" stroke="#333" stroke-width="1"/></svg>
<div class="t" style="left:700px;top:360px;">Max</div>
<div class="a" style="left:547px;top:403px;width:13px;height:13px;border:1px solid #333;background:#fff"></div>
<div class="t" style="left:566px;top:403px;">Compression with precision</div>
<div class="a" style="left:726px;top:401px;width:65px;height:20px;border:1px solid #a9a9a9;background:#f0f0f0"></div>
<div class="a" style="left:775px;top:403px;width:14px;height:8px;background:#ececec;border:1px solid #dedede"></div>
<div class="a" style="left:775px;top:411px;width:14px;height:8px;background:#ececec;border:1px solid #dedede"></div>
<svg style="left:779px;top:405px;" width="6" height="4" viewBox="0 0 6 4"><path d="M0 3.5 L3 0 L6 3.5 Z" fill="#6d6d6d"/></svg>
<svg style="left:779px;top:413px;" width="6" height="4" viewBox="0 0 6 4"><path d="M0 0 L6 0 L3 3.5 Z" fill="#6d6d6d"/></svg>
<div class="t" style="left:728px;top:404px;color:#828282">0.100</div>
<div class="a" style="left:684px;top:493px;width:73px;height:21px;border:2px solid #0078d7;background:#e1e1e1"></div>
<div class="t" style="left:684px;top:497px;width:83.9px;text-align:center">OK</div>
<div class="a" style="left:765px;top:493px;width:73px;height:21px;border:1px solid #adadad;background:#e1e1e1"></div>
<div class="t" style="left:765px;top:497px;width:83.9px;text-align:center">Apply</div>
<div class="a" style="left:846px;top:493px;width:73px;height:21px;border:1px solid #adadad;background:#e1e1e1"></div>
<div class="t" style="left:845px;top:497px;width:85px;text-align:center">Cancel</div>
</body></html>
